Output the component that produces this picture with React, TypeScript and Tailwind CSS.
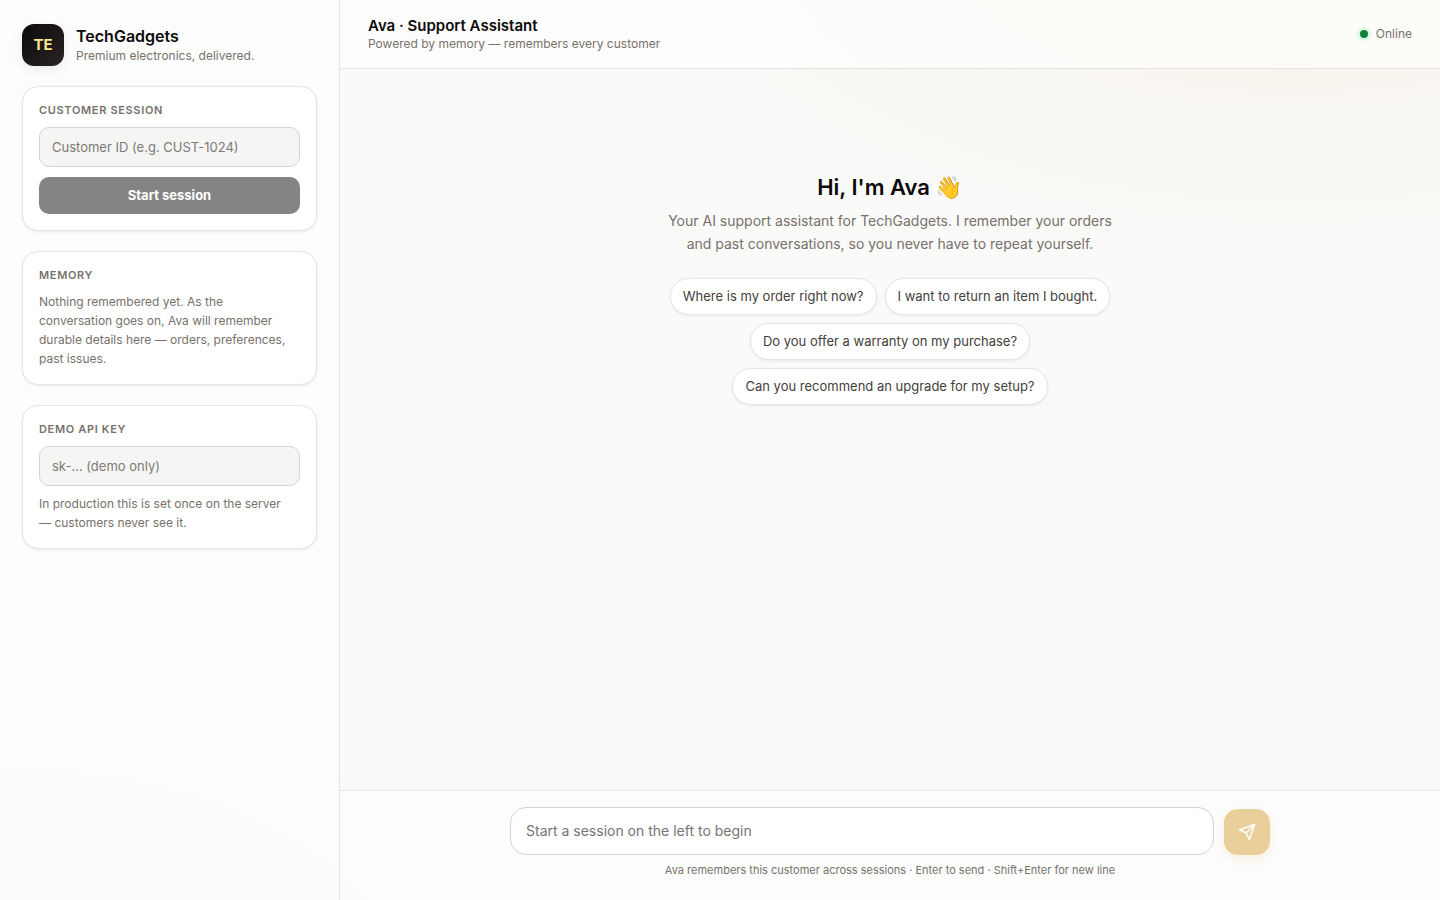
import { useState, type ReactNode } from 'react';

const suggestions = [
  'Where is my order right now?',
  'I want to return an item I bought.',
  'Do you offer a warranty on my purchase?',
  'Can you recommend an upgrade for my setup?',
];

const fieldClass =
  'h-10 w-full rounded-[10px] border border-[#d6d3d1] bg-[#f5f5f4] px-3 text-[13px] text-[#1c1917] placeholder:text-[#7d7a77] outline-none focus:border-[#ca8a04]';

const cardTitleClass =
  'mb-2.5 block text-[11px] leading-[14px] font-semibold uppercase tracking-[0.06em] text-[#78716c]';

function Card({ children }: { children: ReactNode }) {
  return (
    <section className="rounded-2xl border border-[#e7e5e4] bg-white p-4 shadow-[0_1px_3px_rgba(12,10,9,0.08)]">
      {children}
    </section>
  );
}

function SendIcon() {
  return (
    <svg
      width="18"
      height="18"
      viewBox="0 0 24 24"
      fill="none"
      stroke="currentColor"
      strokeWidth="2"
      strokeLinecap="round"
      strokeLinejoin="round"
      aria-hidden="true"
    >
      <path d="M22 2 11 13" />
      <path d="M22 2 15 22l-4-9-9-4Z" />
    </svg>
  );
}

function Sidebar() {
  const [customerId, setCustomerId] = useState('');
  const [apiKey, setApiKey] = useState('');

  return (
    <aside className="flex w-[340px] shrink-0 flex-col gap-5 overflow-y-auto border-r border-[#e7e5e4] bg-white/65 px-[22px] py-6">
      {/* Brand */}
      <div className="flex items-center gap-3">
        <div className="flex size-[42px] items-center justify-center rounded-xl bg-linear-to-br from-[#0c0a09] to-[#292524] text-[15px] font-bold text-[#fde68a] shadow-[0_4px_12px_rgba(12,10,9,0.08)]">
          TE
        </div>
        <div>
          <h1 className="text-base leading-[22px] font-semibold text-[#0c0a09]">TechGadgets</h1>
          <p className="text-xs leading-[18px] text-[#78716c]">Premium electronics, delivered.</p>
        </div>
      </div>

      {/* Session */}
      <Card>
        <label htmlFor="customer-id" className={cardTitleClass}>
          Customer session
        </label>
        <input
          id="customer-id"
          value={customerId}
          onChange={(e) => setCustomerId(e.target.value)}
          placeholder="Customer ID (e.g. CUST-1024)"
          className={fieldClass}
        />
        <button
          type="button"
          disabled={!customerId}
          className="mt-2.5 h-[37px] w-full rounded-[10px] bg-[#0c0a09] text-[13px] font-bold text-white disabled:bg-[#848484]"
        >
          Start session
        </button>
      </Card>

      {/* Memory */}
      <Card>
        <h2 className={cardTitleClass}>Memory</h2>
        <p className="pr-2 text-xs leading-[19px] text-[#78716c]">
          Nothing remembered yet. As the conversation goes on, Ava will remember durable details here — orders,
          preferences, past issues.
        </p>
      </Card>

      {/* API key */}
      <Card>
        <label htmlFor="api-key" className={cardTitleClass}>
          Demo API key
        </label>
        <input
          id="api-key"
          type="password"
          value={apiKey}
          onChange={(e) => setApiKey(e.target.value)}
          placeholder="sk-… (demo only)"
          className={fieldClass}
        />
        <p className="mt-2 pr-2 text-xs leading-[19px] text-[#78716c]">
          In production this is set once on the server — customers never see it.
        </p>
      </Card>
    </aside>
  );
}

export default function App() {
  const [message, setMessage] = useState('');

  return (
    <div className="flex h-screen bg-[#fafaf9] bg-[radial-gradient(1200px_600px_at_90%_-10%,rgba(202,138,4,0.08),transparent_60%),radial-gradient(900px_500px_at_0%_110%,rgba(12,10,9,0.04),transparent_60%)] font-['Inter','Noto_Color_Emoji',sans-serif] text-[#0c0a09]">
      <Sidebar />

      <main className="flex min-w-0 flex-1 flex-col">
        <header className="flex items-center justify-between border-b border-[#e7e5e4] bg-white/65 px-7 py-4">
          <div>
            <h2 className="text-[15px] leading-5 font-semibold">Ava · Support Assistant</h2>
            <p className="text-xs leading-4 text-[#78716c]">Powered by memory — remembers every customer</p>
          </div>
          <div className="flex items-center gap-2 text-xs text-[#78716c]">
            <span className="size-2 rounded-full bg-[#15803d] shadow-[0_0_0_3px_#dcfce7]" />
            Online
          </div>
        </header>

        <div className="flex flex-1 flex-col items-center overflow-y-auto px-7 pt-[100px]">
          <h3 className="text-[22px] leading-9 font-semibold">Hi, I'm Ava 👋</h3>
          <p className="mt-1 max-w-[460px] text-center text-sm leading-[23px] text-[#78716c]">
            Your AI support assistant for TechGadgets. I remember your orders and past conversations, so you never
            have to repeat yourself.
          </p>
          <div className="mt-[23px] flex max-w-[520px] flex-wrap justify-center gap-2">
            {suggestions.map((text) => (
              <button
                key={text}
                type="button"
                onClick={() => setMessage(text)}
                className="h-[37px] rounded-full border border-[#e7e5e4] bg-white px-3 text-[13px] text-[#44403c] shadow-[0_1px_3px_rgba(12,10,9,0.08)]"
              >
                {text}
              </button>
            ))}
          </div>
        </div>

        <footer className="border-t border-[#e7e5e4] bg-white/65 px-7 pt-4 pb-[21px]">
          <form className="mx-auto flex max-w-[760px] items-end gap-2.5" onSubmit={(e) => e.preventDefault()}>
            <textarea
              rows={1}
              aria-label="Message"
              value={message}
              onChange={(e) => setMessage(e.target.value)}
              placeholder="Start a session on the left to begin"
              className="h-12 flex-1 resize-none rounded-2xl border border-[#d6d3d1] bg-white px-[15px] py-3 text-sm leading-[22px] placeholder:text-[#757575] outline-none"
            />
            <button
              type="submit"
              aria-label="Send message"
              className="flex size-[46px] items-center justify-center rounded-[14px] bg-[#e9d09a] text-white shadow-[0_4px_12px_rgba(202,138,4,0.12)]"
            >
              <SendIcon />
            </button>
          </form>
          <p className="mt-1.5 text-center text-[11px] leading-[18px] text-[#78716c]">
            Ava remembers this customer across sessions · Enter to send · Shift+Enter for new line
          </p>
        </footer>
      </main>
    </div>
  );
}
